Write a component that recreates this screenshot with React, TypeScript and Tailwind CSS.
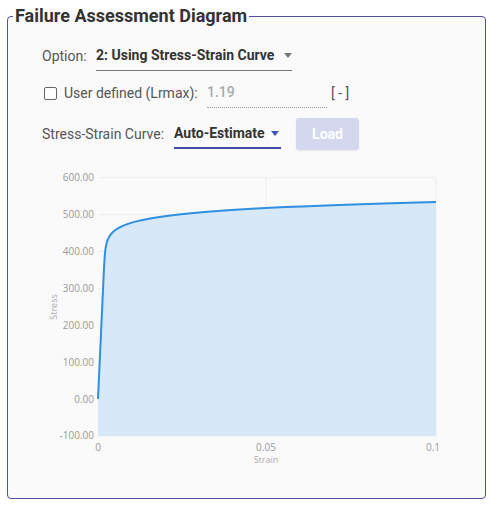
import React from "react";

function buildCurve() {
  const E = 200000;
  const K = 590.9;
  const inv = 23;
  const X0 = 98, X1 = 436, Y0 = 398, YS = 36.9;
  const px = (e: number) => X0 + (e / 0.1) * (X1 - X0);
  const py = (s: number) => Y0 - (s / 100) * YS;
  const pts: [number, number][] = [];
  for (let s = 0; s <= 534.01; s += 2) {
    const e = s / E + Math.pow(s / K, inv);
    if (e > 0.1) break;
    pts.push([px(e), py(s)]);
  }
  let lo = 400, hi = 600;
  for (let i = 0; i < 40; i++) {
    const m = (lo + hi) / 2;
    const e = m / E + Math.pow(m / K, inv);
    if (e > 0.1) hi = m; else lo = m;
  }
  pts.push([px(0.1), py(lo)]);
  const line = pts.map((p, i) => `${i ? "L" : "M"}${p[0].toFixed(2)} ${p[1].toFixed(2)}`).join(" ");
  const area = `${line} L${X1} 435 L${X0} 435 Z`;
  return { line, area };
}

export default function App() {
  const { line, area } = buildCurve();
  const yTicks = [600, 500, 400, 300, 200, 100, 0, -100];
  const yOf = (v: number) => 398 - (v / 100) * 36.9;
  return (
    <div className="w-[493px] h-[506px] bg-white pt-[5px] pl-[7px]" style={{ fontFamily: "Roboto, 'Noto Sans', sans-serif" }}>
      <fieldset className="w-[479px] min-w-0 border border-[#50509c] rounded-[4px] bg-[#fafafa] h-[494px] p-0 overflow-hidden">
        <legend className="ml-[5px] px-[2px] text-[18px] leading-[22px] font-bold text-[#333333]">
          Failure Assessment Diagram
        </legend>
        <div className="pl-[34px]">
          <div className="flex items-center h-[30px] mt-[14px] text-[14px]">
            <span className="text-[#555555] w-[54px]">Option:</span>
            <div className="relative flex items-center w-[196px] h-[30px] border-b border-[#777777]">
              <span className="font-bold text-[#333333]">2: Using Stress-Strain Curve</span>
              <span className="absolute right-[0px] top-[12px] w-0 h-0 border-l-[4px] border-r-[4px] border-t-[5px] border-l-transparent border-r-transparent border-t-[#777777]" />
            </div>
          </div>
          <div className="flex items-center h-[30px] mt-[7px] text-[14px]">
            <span className="w-[13px] h-[13px] ml-[2px] border-[1.5px] border-[#666666] rounded-[2px] bg-white" />
            <span className="ml-[7px] text-[#555555] w-[143px]">User defined (Lrmax):</span>
            <div className="w-[120px] h-[30px] flex items-center border-b border-dotted border-[#999999]">
              <span className="text-[#aaaaaa] font-medium">1.19</span>
            </div>
            <span className="ml-[4px] text-[#555555]">[ - ]</span>
          </div>
          <div className="flex items-center h-[34px] mt-[9px] text-[14px]">
            <span className="text-[#555555] w-[132px]">Stress-Strain Curve:</span>
            <div className="relative flex items-center w-[107px] h-[30px] border-b-2 border-[#3f47a8]">
              <span className="font-bold text-[#333333]">Auto-Estimate</span>
              <span className="absolute right-[2px] top-[12px] w-0 h-0 border-l-[4px] border-r-[4px] border-t-[5px] border-l-transparent border-r-transparent border-t-[#3f51b5]" />
            </div>
            <button className="ml-[15px] w-[63px] h-[32px] rounded-[3px] bg-[#d4d7ee] text-white font-bold text-[14px] shadow-[0_1px_2px_rgba(0,0,0,0.08)]">
              Load
            </button>
          </div>
        </div>
        <svg
          className="block ml-[12px] mt-[15px]"
          width={460}
          height={300}
          viewBox="20 165 460 300"
          style={{ fontFamily: "'Open Sans', 'DejaVu Sans', sans-serif" }}
        >
          {yTicks.map((v) => (
            <line key={v} x1={98} x2={436} y1={yOf(v)} y2={yOf(v)} stroke="#eeeeee" strokeWidth={1} />
          ))}
          <line x1={266} x2={266} y1={177} y2={435} stroke="#eeeeee" />
          <line x1={436} x2={436} y1={177} y2={435} stroke="#eeeeee" />
          <path d={area} fill="#d7e9f8" />
          <path d={line} fill="none" stroke="#2f8fe0" strokeWidth={2} strokeLinejoin="round" />
          {yTicks.map((v) => (
            <text key={v} x={94} y={yOf(v) + 3.5} textAnchor="end" fontSize={10} fill="#999999">
              {v.toFixed(2)}
            </text>
          ))}
          <text x={98} y={450} textAnchor="middle" fontSize={10} fill="#999999">0</text>
          <text x={266} y={450} textAnchor="middle" fontSize={10} fill="#999999">0.05</text>
          <text x={433} y={450} textAnchor="middle" fontSize={10} fill="#999999">0.1</text>
          <text x={266} y={462} textAnchor="middle" fontSize={9} fill="#aaaaaa">Strain</text>
          <text x={0} y={0} textAnchor="middle" fontSize={9} fill="#aaaaaa" transform="translate(57 306) rotate(-90)">Stress</text>
        </svg>
      </fieldset>
    </div>
  );
}
